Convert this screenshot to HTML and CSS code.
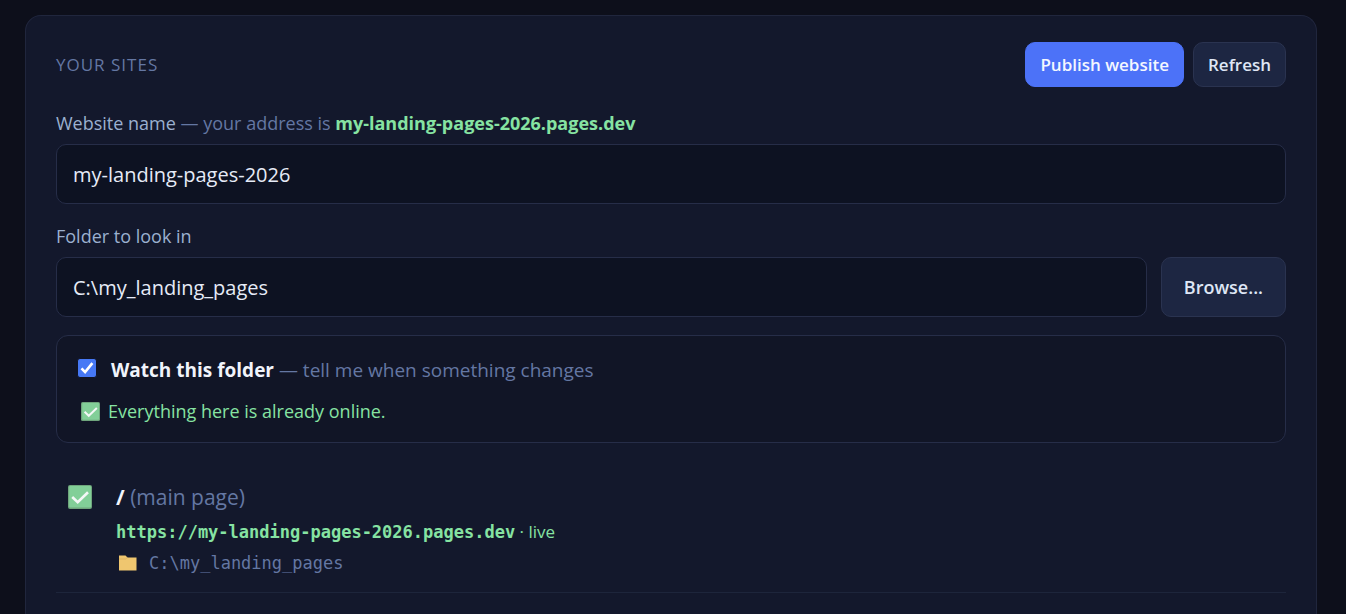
FILE: index.html
```html
<!DOCTYPE html>
<html lang="en">
<head>
<meta charset="utf-8">
<meta name="viewport" content="width=device-width, initial-scale=1">
<title>Your sites</title>
<link rel="stylesheet" href="styles.css">
</head>
<body class="page">
<main class="card">
  <header class="card-head">
    <h1 class="card-title">Your sites</h1>
    <div class="actions">
      <button class="btn btn-primary" type="button">Publish website</button>
      <button class="btn" type="button">Refresh</button>
    </div>
  </header>

  <div class="field">
    <label class="label" for="site-name">Website name <span class="muted">— your address is</span> <strong class="address">my-landing-pages-2026.pages.dev</strong></label>
    <input class="input" id="site-name" type="text" value="my-landing-pages-2026">
  </div>

  <div class="field">
    <label class="label" for="folder">Folder to look in</label>
    <div class="field-row">
      <input class="input" id="folder" type="text" value="C:\my_landing_pages">
      <button class="btn btn-large" type="button">Browse...</button>
    </div>
  </div>

  <section class="watch">
    <div class="watch-line">
      <input class="check" id="watch" type="checkbox" checked>
      <label class="watch-label" for="watch"><strong class="strong">Watch this folder</strong> <span class="muted">— tell me when something changes</span></label>
    </div>
    <p class="status">
      <svg class="tick-small" viewBox="0 0 24 24" aria-hidden="true"><rect width="24" height="24" rx="2" fill="#6fa57c"/><rect x="1.5" y="1.2" width="21.3" height="21.3" rx="1" fill="#82cf98"/><path d="M4.5 12.3l5.3 5.1L20 7.5" fill="none" stroke="#f3f7f6" stroke-width="2.5"/></svg>
      <span>Everything here is already online.</span>
    </p>
  </section>

  <ul class="sites">
    <li class="site">
      <svg class="tick" viewBox="0 0 24 24" aria-hidden="true"><rect width="24" height="24" rx="2" fill="#6fa57c"/><rect x="1.2" y="1" width="21.8" height="21.5" rx="1" fill="#82cf98"/><path d="M4.2 12l5.5 5.2L20 7.2" fill="none" stroke="#f3f7f6" stroke-width="2.6"/></svg>
      <div class="site-body">
        <div class="site-name"><strong class="strong">/</strong> <span class="muted">(main page)</span></div>
        <div class="site-url"><a class="url" href="https://my-landing-pages-2026.pages.dev">https://my-landing-pages-2026.pages.dev</a> · live</div>
        <div class="site-path">
          <svg class="folder" viewBox="0 0 18 16" aria-hidden="true"><path d="M0 .5h6.500l2 2H17.500V15.500H0z" fill="#efc66f"/><path d="M0 4h6.500l1.800-1.500" fill="none" stroke="#d9ae5d" stroke-width=".7"/></svg>
          <span>C:\my_landing_pages</span>
        </div>
      </div>
    </li>
  </ul>
</main>
</body>
</html>
```
FILE: styles.css
```css
* { box-sizing: border-box; }

.page {
  margin: 0;
  min-height: 100vh;
  display: flex;
  flex-direction: column;
  padding: 15px 29px 0 25px;
  background: #0d0f1b;
  color: #e6ebf7;
  font-family: "Open Sans", "Noto Sans", sans-serif;
  font-size: 18px;
  line-height: 24px;
}

.card {
  flex: 1;
  padding: 26px 30px 0;
  background: #13182c;
  border: 1px solid #20263d;
  border-bottom: 0;
  border-radius: 16px 16px 0 0;
}

.card-head {
  display: flex;
  align-items: center;
  justify-content: space-between;
  margin-bottom: 24px;
}

.card-title {
  margin: 0;
  color: #6477a3;
  font-size: 17px;
  font-weight: 400;
  letter-spacing: 1px;
  text-transform: uppercase;
}

.actions { display: flex; gap: 9px; }

.btn {
  height: 45px;
  padding: 0 14px;
  border: 1px solid #2a3350;
  border-radius: 10px;
  background: #1d2642;
  color: #dfe6f5;
  font: 600 17px/24px "Open Sans", "Noto Sans", sans-serif;
}

.btn-primary {
  border-color: #4c72f8;
  background: #4c72f8;
  color: #f4f7ff;
}

.btn-large {
  height: 60px;
  padding: 0 22px;
  font-size: 18px;
}

.field { margin-bottom: 20px; }

.label {
  display: block;
  margin-bottom: 9px;
  color: #9bb0d0;
}

.muted { color: #6477a3; }
.strong { color: #f1f4fb; font-weight: 700; }
.address { color: #86e3a2; font-weight: 700; }

.field-row { display: flex; gap: 14px; }

.input {
  width: 100%;
  min-width: 0;
  height: 60px;
  padding: 0 16px;
  border: 1px solid #262d48;
  border-radius: 10px;
  background: #0d1222;
  color: #e6ebf7;
  font: 400 20px/24px "Open Sans", "Noto Sans", sans-serif;
}

.field-row .input { flex: 1; }

.watch {
  display: flex;
  flex-direction: column;
  gap: 17px;
  margin-top: -2px;
  padding: 22px 20px 19px;
  border: 1px solid #262d48;
  border-radius: 12px;
  background: #111526;
}

.watch-line { display: flex; align-items: center; font-size: 19px; }

.check {
  appearance: none;
  width: 20px;
  height: 20px;
  margin: 0 14px 4px 0;
  border-radius: 3px;
  border: 1px solid #101425;
  background: #4678f5 url("data:image/svg+xml,%3Csvg xmlns='http://www.w3.org/2000/svg' viewBox='0 0 18 18'%3E%3Cpath d='M3.5 9.3l3.6 3.8 7.3-9' fill='none' stroke='white' stroke-width='2.6'/%3E%3C/svg%3E") center / 18px 18px no-repeat;
}

.status {
  display: flex;
  align-items: center;
  gap: 8px;
  margin: 0;
  padding-left: 4px;
  color: #86e3a2;
}

.tick-small { width: 19px; height: 19px; }

.sites { margin: 0; padding: 0; list-style: none; }

.site {
  display: flex;
  gap: 24px;
  padding: 42px 12px 17px;
  border-bottom: 1px solid #1d253b;
}

.tick { width: 24px; height: 24px; }

.site-name { font-size: 21px; }

.site-url { margin-top: 11px; font-size: 17px; color: #86e3a2; }

.url {
  color: #86e3a2;
  font: 700 17px/24px "DejaVu Sans Mono", "Liberation Mono", monospace;
  text-decoration: none;
}

.site-path {
  display: flex;
  align-items: center;
  gap: 12px;
  margin-top: 7px;
  padding-left: 3px;
  color: #6477a3;
  font: 400 17px/24px "DejaVu Sans Mono", "Liberation Mono", monospace;
}

.folder { width: 18px; height: 16px; }
```
